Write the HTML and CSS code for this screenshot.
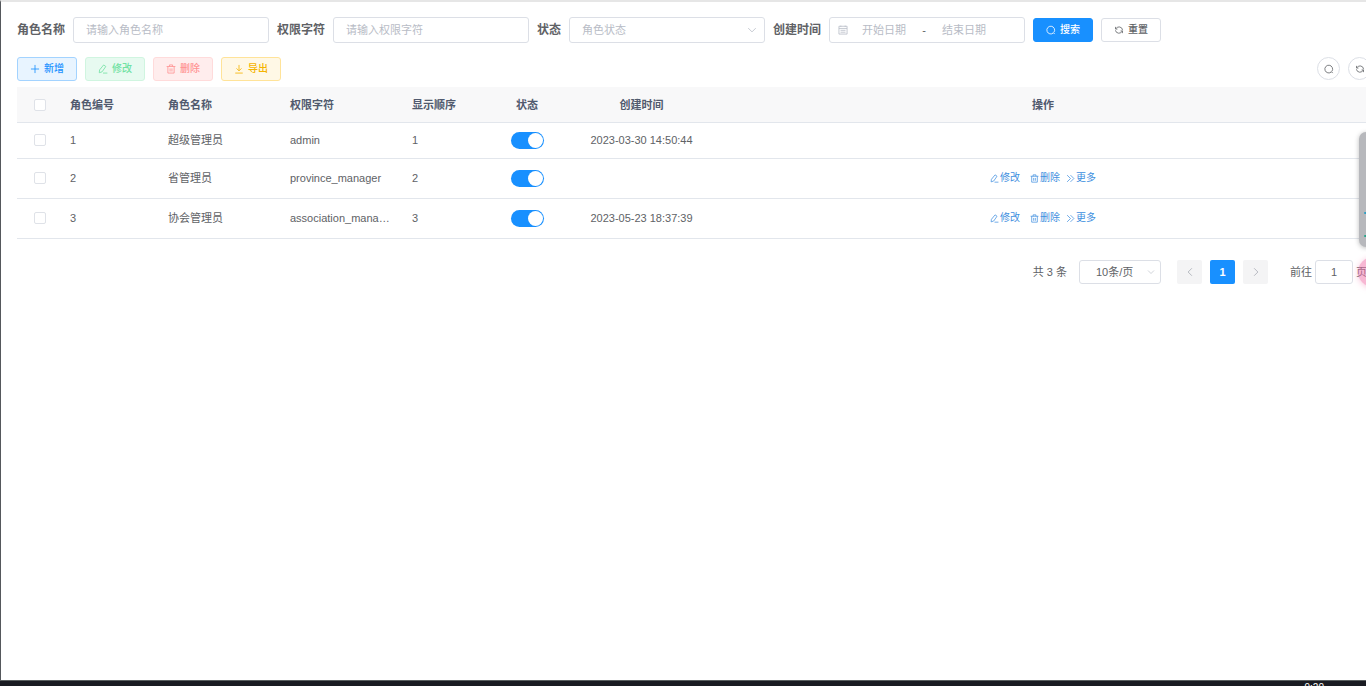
FILE: index.html
```
<!DOCTYPE html>
<html lang="zh-CN">
<head>
<meta charset="utf-8">
<title>角色管理</title>
<link rel="stylesheet" href="styles.css">
</head>
<body>
<svg class="sprite" aria-hidden="true">
  <symbol id="search" viewBox="0 0 16 16"><path d="M12 12.500A6.200 6.200 0 1 1 12.800 11.500M11.500 12l2.500 2.500"/></symbol>
  <symbol id="refresh" viewBox="0 0 16 16"><path d="M2.500 3v3.500H5.500M3 6A5.700 5.700 0 0 1 13.700 8.500M13.500 13V9.500H10.500M13 10A5.700 5.700 0 0 1 2.300 8.500"/></symbol>
  <symbol id="plus" viewBox="0 0 16 16"><path d="M8 1.500v13M1.500 8h13"/></symbol>
  <symbol id="edit" viewBox="0 0 16 16"><path d="M9 1.500l3.500 2.500-6 8.500-4.500 1.500.500-4.500zM8 14.500h7"/></symbol>
  <symbol id="trash" viewBox="0 0 16 16"><path d="M1 4h14M5.500 4V1.500h5V4M3 4v10.500h10V4M6.500 7v5M9.500 7v5"/></symbol>
  <symbol id="download" viewBox="0 0 16 16"><path d="M8 1.500v9M4 7l4 4 4-4M2 14.500h12"/></symbol>
  <symbol id="more" viewBox="0 0 16 16"><path d="M2 2l6 6-6 6M8 2l6 6-6 6"/></symbol>
  <symbol id="down" viewBox="0 0 16 16"><path d="M2 5l6 6 6-6"/></symbol>
  <symbol id="left" viewBox="0 0 16 16"><path d="M11 2L5 8l6 6"/></symbol>
  <symbol id="right" viewBox="0 0 16 16"><path d="M5 2l6 6-6 6"/></symbol>
  <symbol id="calendar" viewBox="0 0 16 16"><path d="M1.500 2h13v12.500h-13zM1.500 5.500h13M4.500 1v2M11.500 1v2M4 8.500h8M4 11.500h8"/></symbol>
</svg>
<main class="page">
  <form class="filters">
    <div class="field"><label for="name">角色名称</label><input class="box" id="name" type="text" placeholder="请输入角色名称"></div>
    <div class="field"><label for="key">权限字符</label><input class="box" id="key" type="text" placeholder="请输入权限字符"></div>
    <div class="field"><label for="state">状态</label>
      <span class="select"><select class="box" id="state"><option>角色状态</option></select><svg class="icon"><use href="#down"/></svg></span></div>
    <div class="field"><label for="start">创建时间</label>
      <span class="box range"><svg class="icon"><use href="#calendar"/></svg><input id="start" type="text" placeholder="开始日期"><span>-</span><input type="text" aria-label="结束日期" placeholder="结束日期"></span></div>
    <button class="btn primary" type="button"><svg class="icon"><use href="#search"/></svg>搜索</button>
    <button class="btn" type="button"><svg class="icon"><use href="#refresh"/></svg>重置</button>
  </form>
  <div class="toolbar">
    <button class="btn add" type="button"><svg class="icon"><use href="#plus"/></svg>新增</button>
    <button class="btn edit" type="button" disabled><svg class="icon"><use href="#edit"/></svg>修改</button>
    <button class="btn remove" type="button" disabled><svg class="icon"><use href="#trash"/></svg>删除</button>
    <button class="btn export" type="button"><svg class="icon"><use href="#download"/></svg>导出</button>
    <span class="spacer"></span>
    <button class="round" type="button" aria-label="显示搜索"><svg class="icon"><use href="#search"/></svg></button>
    <button class="round" type="button" aria-label="刷新"><svg class="icon"><use href="#refresh"/></svg></button>
  </div>
  <table class="roles">
    <colgroup><col class="c-check"><col class="c-id"><col class="c-name"><col class="c-key"><col class="c-order"><col class="c-state"><col class="c-time"><col></colgroup>
    <thead>
      <tr><th class="center"><input type="checkbox" aria-label="全选"></th><th>角色编号</th><th>角色名称</th><th>权限字符</th><th>显示顺序</th><th class="center">状态</th><th class="center">创建时间</th><th class="center">操作</th></tr>
    </thead>
    <tbody>
      <tr class="short"><td class="center"><input type="checkbox" aria-label="选择 1"></td><td>1</td><td>超级管理员</td><td class="key">admin</td><td>1</td><td class="center"><input class="switch" type="checkbox" role="switch" aria-label="状态 1" checked></td><td class="center">2023-03-30 14:50:44</td><td></td></tr>
      <tr><td class="center"><input type="checkbox" aria-label="选择 2"></td><td>2</td><td>省管理员</td><td class="key">province_manager</td><td>2</td><td class="center"><input class="switch" type="checkbox" role="switch" aria-label="状态 2" checked></td><td></td>
        <td><div class="actions"><button type="button"><svg class="icon"><use href="#edit"/></svg>修改</button><button type="button"><svg class="icon"><use href="#trash"/></svg>删除</button><button class="more" type="button"><svg class="icon"><use href="#more"/></svg>更多</button></div></td></tr>
      <tr><td class="center"><input type="checkbox" aria-label="选择 3"></td><td>3</td><td>协会管理员</td><td class="key">association_manager</td><td>3</td><td class="center"><input class="switch" type="checkbox" role="switch" aria-label="状态 3" checked></td><td class="center">2023-05-23 18:37:39</td>
        <td><div class="actions"><button type="button"><svg class="icon"><use href="#edit"/></svg>修改</button><button type="button"><svg class="icon"><use href="#trash"/></svg>删除</button><button class="more" type="button"><svg class="icon"><use href="#more"/></svg>更多</button></div></td></tr>
    </tbody>
  </table>
  <nav class="pager" aria-label="分页">
    <span>共 3 条</span>
    <span class="select size"><select class="box" aria-label="每页条数"><option>10条/页</option></select><svg class="icon"><use href="#down"/></svg></span>
    <div class="pages">
      <button type="button" disabled aria-label="上一页"><svg class="icon"><use href="#left"/></svg></button>
      <button class="current" type="button">1</button>
      <button type="button" disabled aria-label="下一页"><svg class="icon"><use href="#right"/></svg></button>
    </div>
    <div class="jump"><label for="jump">前往</label><input class="box" id="jump" type="text" value="1"><span>页</span></div>
  </nav>
</main>
<aside class="dock"><i></i><i></i></aside>
<div class="bubble"></div>
<footer class="taskbar"><span>9:20</span></footer>
</body>
</html>
```
FILE: styles.css
```
* { box-sizing: border-box; }
body {
  margin: 0;
  min-height: 100vh;
  display: flex;
  flex-direction: column;
  overflow: hidden;
  background: #fff;
  color: #606266;
  font: 11px/16px "Liberation Sans", "Noto Sans CJK SC", sans-serif;
}
input, select, button { font: inherit; color: inherit; margin: 0; }
button { cursor: pointer; }
.sprite { position: absolute; width: 0; height: 0; }
.icon { width: 10px; height: 10px; flex: none; fill: none; stroke: currentColor; stroke-width: 1.3; }

.page {
  flex: 1;
  margin-right: -5px;
  padding: 15px 0 0 16px;
  border-left: 1px solid #55585c;
  border-top: 2px solid #e6e6e6;
}
.filters { display: flex; align-items: center; gap: 8px; }
.field { display: flex; align-items: center; gap: 8px; }
.field label { font-size: 12px; font-weight: 700; white-space: nowrap; }
.box {
  width: 196px;
  height: 26px;
  padding: 0 12px;
  border: 1px solid #dcdfe6;
  border-radius: 3px;
  background: #fff;
  outline: 0;
}
::placeholder { color: #b8bcc6; opacity: 1; }
.select { position: relative; display: flex; }
.select select { appearance: none; color: #b8bcc6; }
.select .icon { position: absolute; right: 8px; top: 8px; color: #b8bcc6; pointer-events: none; }
.range { display: flex; align-items: center; padding: 0 8px; }
.range .icon { color: #b8bcc6; }
.range input { width: 72px; padding: 0; border: 0; outline: 0; text-align: center; background: none; }
.range span { width: 8px; text-align: center; }

.btn {
  display: flex;
  align-items: center;
  justify-content: center;
  gap: 4px;
  width: 60px;
  height: 24px;
  padding: 0;
  border: 1px solid #dcdfe6;
  border-radius: 3px;
  background: #fff;
  font-size: 10px;
  font-weight: 500;
  white-space: nowrap;
}
.primary { background: #1890ff; border-color: #1890ff; color: #fff; }
.add { background: #e8f4ff; border-color: #a3d3ff; color: #1890ff; }
.edit { background: #e7faf0; border-color: #d0f5e0; color: #71e2a3; }
.remove { background: #ffeded; border-color: #ffdbdb; color: #ff9292; }
.export { background: #fff8e6; border-color: #ffe399; color: #f5b400; }
.toolbar { display: flex; gap: 8px; margin: 14px 0 6px; }
.spacer { flex: 1; }
.round {
  display: flex;
  align-items: center;
  justify-content: center;
  width: 23px;
  height: 23px;
  padding: 0;
  border: 1px solid #dcdfe6;
  border-radius: 50%;
  background: #fff;
}

.roles { width: 100%; table-layout: fixed; border-collapse: separate; border-spacing: 0; }
.c-check { width: 45px; }
.c-id { width: 98px; }
.c-name, .c-key { width: 122px; }
.c-order, .c-state { width: 82px; }
.c-time { width: 147px; }
.roles th, .roles td {
  height: 40px;
  padding: 0 8px 1px;
  border-bottom: 1px solid #e2e6ec;
  text-align: left;
  overflow: hidden;
  white-space: nowrap;
  text-overflow: ellipsis;
}
.roles .key { padding-right: 12px; }
.roles th { height: 36px; padding-bottom: 0; background: #f8f8f9; color: #515a6e; font-weight: 700; }
.roles .short td { height: 36px; }
.roles .center { text-align: center; }
.roles input { appearance: none; display: block; margin: 0 auto; width: 12px; height: 12px; border: 1px solid #dfe2e8; border-radius: 2px; background: #fff; }
.roles .switch { display: flex; justify-content: flex-end; width: 33px; height: 17px; padding: 1px; border: 0; border-radius: 9px; background: #1890ff; }
.switch::after { content: ""; width: 15px; height: 15px; border-radius: 50%; background: #fff; }
.actions { display: flex; justify-content: center; gap: 10px; font-size: 10px; color: #3f8fe0; }
.actions button { display: flex; align-items: center; padding: 0; border: 0; background: none; }
.actions .icon { width: 9px; height: 9px; margin-right: 1px; }
.actions .more { margin-left: -4px; }

.pager { display: flex; justify-content: flex-end; align-items: center; margin-top: 21px; padding-right: 4px; }
.pager .box { height: 24px; }
.size { margin: 0 16px 0 12px; }
.size .box { width: 82px; padding: 0 16px; color: #606266; }
.size .icon { width: 8px; height: 8px; right: 6px; }
.pages { display: flex; gap: 8px; }
.pages button { display: flex; align-items: center; justify-content: center; width: 25px; height: 24px; padding: 0; border: 0; border-radius: 2px; background: #f4f4f5; color: #a8abb4; font-weight: 700; }
.pages .current { background: #1890ff; color: #fff; }
.jump { display: flex; align-items: center; gap: 3px; margin-left: 22px; }
.jump .box { width: 38px; padding: 0; text-align: center; }

.dock {
  position: fixed;
  right: -8px;
  top: 132px;
  width: 15px;
  height: 115px;
  padding: 80px 0 0 5px;
  border-radius: 7px;
  background: #b7b8bc;
  box-shadow: 0 1px 5px #0004;
}
.dock i { display: block; width: 6px; height: 2px; margin-bottom: 21px; background: #2f9fc4; border-radius: 1px; }
.dock i:last-child { background: #27a58c; }
.bubble { position: fixed; right: -22px; top: 257px; width: 30px; height: 30px; border-radius: 50%; background: #f070a880; box-shadow: 0 1px 6px #f070a866; }
.taskbar {
  height: 6px;
  padding: 2px 42px 0 0;
  overflow: hidden;
  border-top: 1px solid #5a5f60;
  background: #191b22;
  color: #fff;
  font-size: 10px;
  line-height: 10px;
  text-align: right;
}
```
